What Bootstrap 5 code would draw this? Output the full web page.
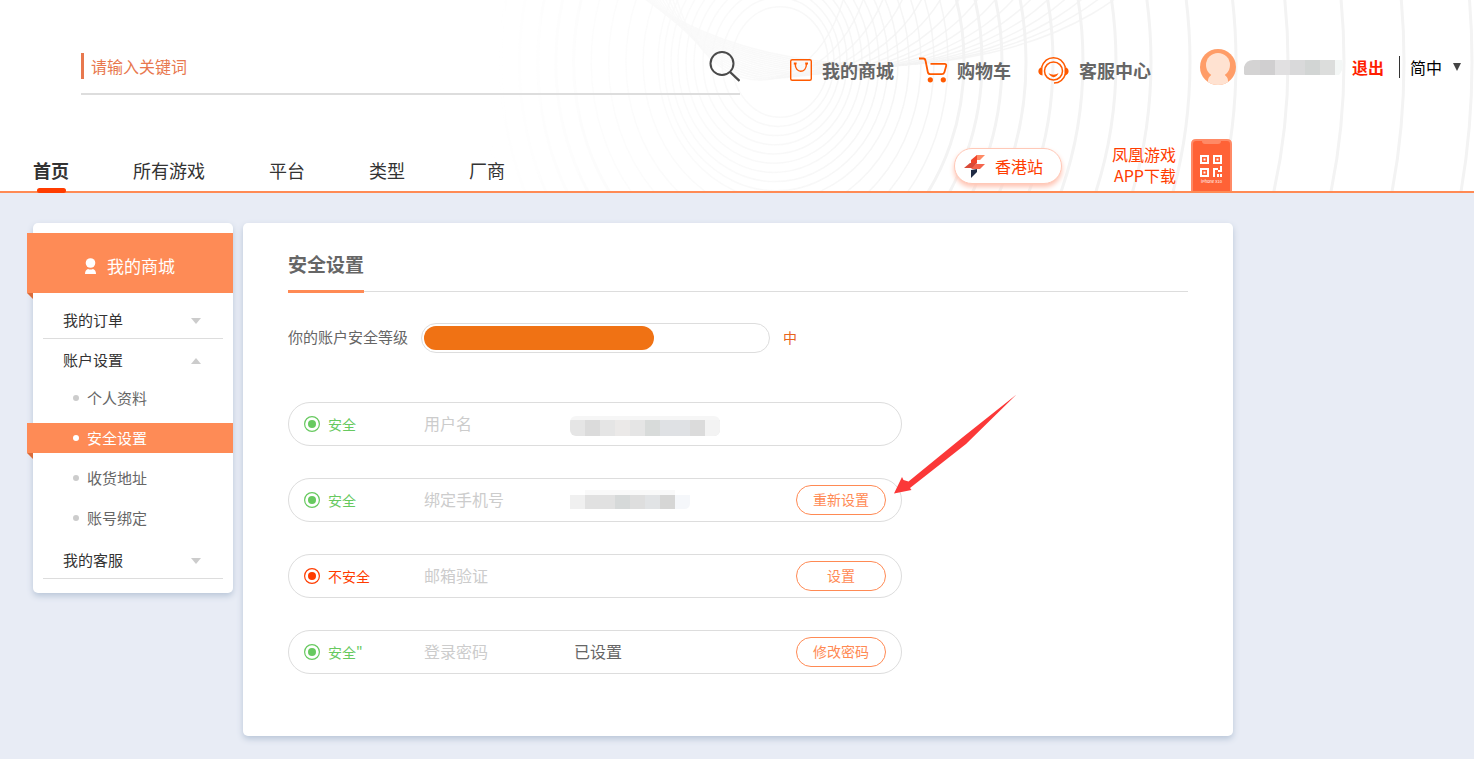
<!DOCTYPE html>
<html lang="zh-CN">
<head>
<meta charset="utf-8">
<meta name="viewport" content="width=device-width, initial-scale=1">
<title>安全设置</title>
<link href="https://cdn.jsdelivr.net/npm/bootstrap@5.3.0/dist/css/bootstrap.min.css" rel="stylesheet">
<style>
  body { background: #e8ecf5; font-family: "Noto Sans CJK SC", sans-serif; font-size: 15px; color: #666; }
  a { text-decoration: none; color: inherit; }
  svg { display: block; flex: none; }

  .site-header { background: #fff; border-bottom: 2px solid #ff8a54; isolation: isolate; }
  .rings { z-index: -1; pointer-events: none; -webkit-mask-image: linear-gradient(90deg, transparent 33%, rgba(0,0,0,.5) 48%, #000 62%); mask-image: linear-gradient(90deg, transparent 33%, rgba(0,0,0,.5) 48%, #000 62%); }
  .top-bar { height: 138px; padding: 37px 13px 44px 81px; }
  .search { flex: 0 1 659px; height: 58px; border-bottom: 2px solid #ddd; }
  .search input { height: 26px; padding: 0 0 0 7px; border: 0; border-left: 3px solid #e8784e; border-radius: 0; background: none; font-size: 16px; line-height: 26px; }
  .search input::placeholder { color: #e8784e; opacity: 1; }
  .search input:focus { box-shadow: none; background: none; }
  .quick { margin-left: 49px; gap: 24px; padding-top: 18px; font-size: 18px; font-weight: 700; line-height: 26px; white-space: nowrap; }
  .quick a { gap: 9px; }
  .user { font-size: 16px; line-height: 24px; white-space: nowrap; }
  .logout { color: #ff1e00; font-weight: 700; margin-left: 9px; }
  .vline { width: 1px; height: 22px; background: #333; margin: 0 10px 0 15px; }
  .lang { color: #000; gap: 11px; font-size: 16px; line-height: 24px; }

  .main-nav { height: 53px; max-width: 1232px; padding-left: 33px; }
  .main-nav .menu { gap: 64px; font-size: 18px; color: #333; }
  .menu a { line-height: 26px; padding: 19px 0 8px; }
  .menu .active { font-weight: 700; }
  .menu .active::after { content: ""; position: absolute; left: 4px; right: 3px; bottom: -2px; height: 5px; border-radius: 3px; background: #ff3c00; }
  .station { width: 108px; height: 36px; margin-top: 10px; padding-left: 9px; gap: 10px; background: #fff; border: 1px solid #ffc9b8; border-radius: 18px; box-shadow: 0 3px 5px #ffc4b3; color: #ff3c00; font-size: 16px; }
  .app-link { color: #ff3c00; font-size: 16px; line-height: 21px; gap: 15px; margin-left: 50px; }
  .app-link span { padding-top: 6px; }

  .page { max-width: 1233px; padding: 30px 0 23px 33px; gap: 10px; }
  .panel { background: #fff; border-radius: 5px; box-shadow: 0 3px 6px #b9c6d8; }
  .side { flex: 0 0 200px; padding: 10px 0 14px; }
  .ribbon { background: #fe8b56; color: #fff; margin-left: -6px; }
  .ribbon::after { content: ""; position: absolute; left: 0; top: 100%; border-top: 6px solid #d96c3a; border-left: 6px solid transparent; }
  .side-head { height: 60px; padding-top: 6px; gap: 10px; font-size: 17px; padding-left: 57px; }
  .group { width: 180px; height: 36px; margin: 10px 10px 4px; padding: 0 22px 0 20px; border: 0; border-bottom: 1px solid #ddd; background: none; color: #333; font-size: 15px; }
  .group.open { border-color: transparent; margin-top: 4px; }
  .sub { gap: 10px; }
  .sub a { height: 30px; padding-left: 40px; gap: 8px; }
  .sub a::before { content: ""; width: 6px; height: 6px; border-radius: 50%; background: #ccc; }
  .sub a.ribbon { padding-left: 46px; }
  .sub a.ribbon::before { background: #fff; }

  .content { padding: 26px 45px 62px; }
  .title-row { height: 43px; border-bottom: 1px solid #ddd; }
  .title-row h1 { height: 44px; margin: 0; border-bottom: 3px solid #ff8a54; font-size: 19px; line-height: 30px; font-weight: 700; }
  .level { margin: 31px 0 49px; gap: 13px; line-height: 28px; }
  .level .progress { flex: 0 1 349px; height: 30px; padding: 2px; border: 1px solid #ddd; border-radius: 15px; background: #fff; }
  .level .progress-bar { background: #f07214; border-radius: 12px; }
  .level strong { color: #e8641b; font-weight: 400; font-size: 14px; }
  .items { gap: 32px; max-width: 614px; }
  .item { height: 44px; border: 1px solid #ddd; border-radius: 22px; padding: 0 15px; }
  .state { flex: 0 0 120px; gap: 8px; font-size: 14px; line-height: 20px; color: #67c95f; }
  .state.bad { color: #ff3c00; }
  .item-label { flex: 0 0 146px; font-size: 16px; color: #ccc; padding-bottom: 2px; }
  .item-value { font-size: 16px; padding: 0 0 2px 4px; }
  .item .btn { width: 90px; height: 30px; padding: 0 0 2px; border: 1px solid #ff8a54; border-radius: 15px; color: #ff8a54; font-size: 14px; line-height: 26px; }
  .item .btn:hover { background: #ff8a54; color: #fff; }
  .pointer { left: 604px; top: -86px; }
</style>
</head>
<body>
<header class="site-header position-relative">
  <svg class="rings position-absolute top-0 end-0 w-100 h-100" viewBox="0 0 1474 191" preserveAspectRatio="xMaxYMin slice" fill="none" stroke="#f3f3f3" aria-hidden="true"></svg>
  <div class="top-bar d-flex align-items-start">
    <form class="search d-flex align-items-start" role="search" onsubmit="return false">
      <input class="form-control mt-3" type="search" placeholder="请输入关键词" aria-label="请输入关键词">
      <button class="btn p-0 border-0 mt-2 pt-1" type="submit" aria-label="搜索">
        <svg width="32" height="34" viewBox="0 -1 32 34" fill="none" stroke="#4a4a4a" stroke-width="2"><circle cx="14" cy="13.500" r="11.500"/><path d="M22 22l9.500 9" stroke-width="2.400"/></svg>
      </button>
    </form>
    <nav class="quick d-flex" aria-label="快捷入口">
      <a class="d-flex align-items-center" href="#">
        <svg width="24" height="24" viewBox="0 0 24 24" fill="none" stroke="#ff5a00" stroke-width="1.400"><rect x="1.700" y="1.700" width="20.600" height="20.600" rx="1.500"/><path d="M6.200 5.800c0 10 11 10 11.300 0"/><path d="M4.800 5.500h2.800M16.200 5.500h2.800" stroke-width="2"/></svg>我的商城</a>
      <a class="d-flex align-items-center" href="#">
        <svg width="30" height="26" viewBox="0 0 30 26" fill="none" stroke="#ff5a00" stroke-width="1.800"><path d="M1 1.500h4.500c1.500 0 1.800 1 2.100 2.500l2.200 11c.3 1.600 1 2.200 2.500 2.200h11.500c1.600 0 2.200-.6 2.600-2l1.700-6c.4-1.500 0-2.300-1.500-2.300H12.500"/><g fill="#ff5a00" stroke="none"><circle cx="12.300" cy="22.800" r="2.600"/><circle cx="25.300" cy="22.800" r="2.600"/></g></svg>购物车</a>
      <a class="d-flex align-items-center" href="#">
        <svg width="35" height="30" viewBox="-2 -1 35 30" fill="none" stroke="#ff5a00" stroke-width="1.500"><circle cx="16.500" cy="15" r="9"/><path d="M4.500 11.500C9-1.500 24-1.500 28.500 11.500M28.500 18c-2 6-6 9-11.500 9"/><path d="M5.500 11c-5.500 1-5.500 7.500 0 8.500zM27.500 11c5.500 1 5.500 7.500 0 8.500z" fill="#ff5a00" stroke="none"/><path d="M11.500 17c2.500 5.500 8 5.500 10 0-3 2.300-7 2.300-10 0z" fill="#ff5a00" stroke="none"/></svg>客服中心</a>
    </nav>
    <div class="user d-flex align-items-center ms-auto mt-2 pt-1">
      <svg width="36" height="36" viewBox="0 0 36 36" aria-label="头像"><defs><clipPath id="av"><circle cx="18" cy="18" r="18"/></clipPath></defs><g clip-path="url(#av)"><path fill="#ff9d68" d="M0 0h36v36H0z"/><g fill="#ffe2d1"><circle cx="18" cy="16" r="12"/><path d="M12 24h12c0 3 4 3 4 8v4H8v-4c0-5 4-5 4-8z"/></g></g></svg>
      <svg class="ms-2" width="99" height="20" viewBox="0 0 99 20" aria-label="用户名"><path d="M0 17v-7q2-7 9-7h7v15H1z" fill="#d4d3d3"/><path d="M16 3h15v15H16z" fill="#d0cfd0"/><path d="M31 3h15v15H31z" fill="#e1e0e1"/><path d="M46 3h15v15H46z" fill="#d9d9da"/><path d="M61 3h15v15H61z" fill="#d2d5d4"/><path d="M76 3h15v15H76z" fill="#dcdddc"/><path d="M91 3h7q3 8-3 15h-4z" fill="#f4f7f6"/></svg>
      <a class="logout" href="#">退出</a>
      <span class="vline"></span>
      <button class="lang btn d-flex align-items-center p-0 border-0" type="button">简中<svg width="8" height="8" viewBox="0 0 8 8"><path d="M0 0h8L4 8z" fill="#444"/></svg></button>
    </div>
  </div>
  <div class="main-nav d-flex align-items-start">
    <nav class="menu d-flex" aria-label="主导航">
      <a class="active position-relative" href="#">首页</a><a href="#">所有游戏</a><a href="#">平台</a><a href="#">类型</a><a href="#">厂商</a>
    </nav>
    <a class="station d-flex align-items-center ms-auto" href="#">
      <svg width="21" height="24" viewBox="0 0 21 24"><path fill="#ff8a65" d="M13 1h8l-5 5H9z"/><path fill="#f0452b" d="M7 6l6-5v8H7z"/><path fill="#d84a38" d="M0 14l6-5h7l-4 5z"/><path fill="#f4644c" d="M12 10h9l-5 5H7z"/><path fill="#1f2a44" d="M7 16l6-1v3l-6 6z"/></svg>香港站</a>
    <a class="app-link d-flex text-end" href="#"><span>凤凰游戏<br>APP下载</span>
      <svg class="mt-auto" width="41" height="53" viewBox="0 -1 41 53"><path d="M0 52V5q0-5 5-5h31q5 0 5 5v47z" fill="#ff8a66"/><path d="M2 52V5q0-3 3-3h6q0 3 3 3h13q3 0 3-3h6q3 0 3 3v47z" fill="#ff6236"/><g fill="none" stroke="#fff" stroke-width="2"><path d="M10 17h7v7h-7zM23 17h7v7h-7zM10 30h7v7h-7z"/></g><path fill="#fff" d="M12.500 19.500h2v2h-2zM25.500 19.500h2v2h-2zM12.500 32.500h2v2h-2zM22 29h2v9h-2zM24 29h3v2h-3zM29 27h2v6h-4v-2h2zM26 35h2v3h-2zM29 35h2v3h-2z"/><text x="20.500" y="43.500" font-size="4" fill="#fff" text-anchor="middle">iPhone X10</text></svg>
    </a>
  </div>
</header>

<main class="page d-flex align-items-start">
  <aside class="side panel">
    <div class="side-head ribbon position-relative d-flex align-items-center">
      <svg width="13" height="16" viewBox="0 0 13 16" fill="#fff"><circle cx="6.500" cy="5" r="4.800"/><path d="M1 16q0-4 3-5 2.500 1 5 0 3 1 3 5z"/></svg>我的商城</div>
    <button class="group d-flex align-items-center justify-content-between" type="button">我的订单<svg width="10" height="6" viewBox="0 0 10 6"><path d="M0 0h10L5 6z" fill="#ccc"/></svg></button>
    <button class="group open d-flex align-items-center justify-content-between" type="button">账户设置<svg width="10" height="6" viewBox="0 0 10 6"><path d="M0 6h10L5 0z" fill="#ccc"/></svg></button>
    <nav class="sub d-flex flex-column" aria-label="账户设置">
      <a class="d-flex align-items-center" href="#">个人资料</a>
      <a class="ribbon position-relative d-flex align-items-center" href="#" aria-current="page">安全设置</a>
      <a class="d-flex align-items-center" href="#">收货地址</a>
      <a class="d-flex align-items-center" href="#">账号绑定</a>
    </nav>
    <button class="group mb-0 d-flex align-items-center justify-content-between" type="button">我的客服<svg width="10" height="6" viewBox="0 0 10 6"><path d="M0 0h10L5 6z" fill="#ccc"/></svg></button>
  </aside>

  <section class="content panel flex-grow-1">
    <div class="title-row d-flex align-items-start"><h1>安全设置</h1></div>
    <div class="level d-flex">
      <span>你的账户安全等级</span>
      <div class="progress" role="progressbar" aria-label="账户安全等级" aria-valuenow="67" aria-valuemin="0" aria-valuemax="100"><div class="progress-bar" style="width: 67%"></div></div>
      <strong>中</strong>
    </div>
    <div class="items d-flex flex-column">
      <div class="item d-flex align-items-center">
        <span class="state d-flex align-items-center"><svg width="16" height="16" viewBox="0 0 16 16"><circle cx="8" cy="8" r="7.400" fill="none" stroke="currentColor" stroke-width="1.200"/><circle cx="8" cy="8" r="4" fill="currentColor"/></svg>安全</span>
        <span class="item-label">用户名</span>
        <svg class="mt-1" width="150" height="20" viewBox="0 0 150 20"><defs><clipPath id="m1"><rect width="150" height="20" rx="6"/></clipPath></defs><g clip-path="url(#m1)"><path fill="#f6f6f6" d="M0 0h150v5H0z"/><path fill="#e5e5e5" d="M0 4h150v16H0z"/><path fill="#dbdbdb" d="M15 4h15v16H15zM120 4h15v16h-15z"/><path fill="#ebe9e8" d="M45 4h15v16H45z"/><path fill="#d8dbda" d="M75 4h15v16H75z"/><path fill="#dfe1e4" d="M90 4h30v16H90z"/><path fill="#f3f3f3" d="M135 4h15v16h-15z"/></g></svg>
      </div>
      <div class="item position-relative d-flex align-items-center">
        <span class="state d-flex align-items-center"><svg width="16" height="16" viewBox="0 0 16 16"><circle cx="8" cy="8" r="7.400" fill="none" stroke="currentColor" stroke-width="1.200"/><circle cx="8" cy="8" r="4" fill="currentColor"/></svg>安全</span>
        <span class="item-label">绑定手机号</span>
        <svg width="120" height="20" viewBox="0 0 120 20"><path fill="#f9f9f9" d="M15 0h90v5H15z"/><path fill="#f0f0f0" d="M0 5h15v14H0z"/><path fill="#e1e1e1" d="M15 5h30v14H15z"/><path fill="#d6d9d9" d="M45 5h15v14H45z"/><path fill="#dedede" d="M60 5h15v14H60z"/><path fill="#e1e3e5" d="M75 5h15v14H75z"/><path fill="#d6d6d5" d="M90 5h15v14H90z"/><path fill="#f5f7fa" d="M105 5h15v8q0 6-6 6h-9z"/></svg>
        <button class="btn ms-auto" type="button">重新设置</button>
        <svg class="pointer position-absolute" width="124" height="102" viewBox="0 0 124 102" aria-hidden="true"><path fill="#fb3838" d="M123.500 1.500L73 51 17 95l1.500 2L1 100.500 9 84l1.500 3 5 1.500L70 44z"/></svg>
      </div>
      <div class="item d-flex align-items-center">
        <span class="state bad d-flex align-items-center"><svg width="16" height="16" viewBox="0 0 16 16"><circle cx="8" cy="8" r="7.400" fill="none" stroke="currentColor" stroke-width="1.200"/><circle cx="8" cy="8" r="4" fill="currentColor"/></svg>不安全</span>
        <span class="item-label">邮箱验证</span>
        <button class="btn ms-auto" type="button">设置</button>
      </div>
      <div class="item d-flex align-items-center">
        <span class="state d-flex align-items-center"><svg width="16" height="16" viewBox="0 0 16 16"><circle cx="8" cy="8" r="7.400" fill="none" stroke="currentColor" stroke-width="1.200"/><circle cx="8" cy="8" r="4" fill="currentColor"/></svg>安全"</span>
        <span class="item-label">登录密码</span>
        <span class="item-value">已设置</span>
        <button class="btn ms-auto" type="button">修改密码</button>
      </div>
    </div>
  </section>
</main>
<script src="https://cdn.jsdelivr.net/npm/bootstrap@5.3.0/dist/js/bootstrap.bundle.min.js"></script>
<script>
  // Header backdrop: rings around a white disc whose spacing widens to the right,
  // with a steeper second set that crosses them along the top edge
  const rings = document.querySelector('.rings');
  const ring = (cx, cy, rx, ry, width, opacity) => {
    const e = document.createElementNS('http://www.w3.org/2000/svg', 'ellipse');
    Object.entries({ cx, cy, rx, ry, 'stroke-width': width, opacity }).forEach(([k, v]) => e.setAttribute(k, v));
    rings.append(e);
  };
  const steps = [828, 834, 840, 847, 854, 862, 870, 879, 888, 898, 909, 921, 934, 948, 964, 982, 1002, 1026, 1053, 1083, 1116, 1151, 1190, 1236, 1288, 1344, 1404, 1472];
  steps.forEach((right, i) => {
    const r = 48 + i * 8 + Math.max(0, right - 900) * .55;
    ring(right - r, 62, r, r * 1.15, i < 14 ? 1.5 : 3, i < 14 ? .8 : 1);
  });
  for (let i = 0; i < 16; i++) {
    const right = 850 + i * 22;
    const r = 90 + i * 14;
    ring(right - r, -50 - i * 4, r, 130 + i * 3, 1.5, .8);
  }
</script>
</body>
</html>
